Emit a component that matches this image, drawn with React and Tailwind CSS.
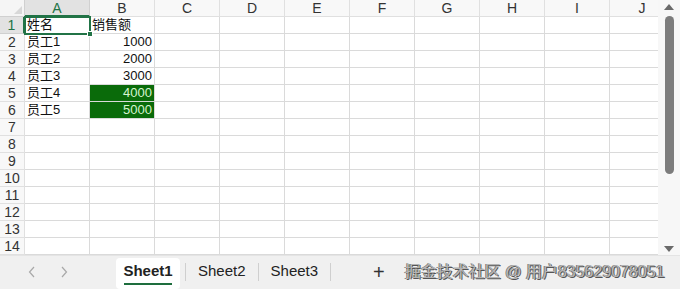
import React from 'react'

const cols = ['A', 'B', 'C', 'D', 'E', 'F', 'G', 'H', 'I', 'J']

const data = {
  1: { A: '姓名', B: '销售额' },
  2: { A: '员工1', B: '1000' },
  3: { A: '员工2', B: '2000' },
  4: { A: '员工3', B: '3000' },
  5: { A: '员工4', B: '4000' },
  6: { A: '员工5', B: '5000' },
}

function Cell({ row, col }) {
  const v = data[row] && data[row][col]
  const isNum = v && /^\d+$/.test(v)
  const green = col === 'B' && (row === 5 || row === 6)
  const selected = row === 1 && col === 'A'
  return (
    <div
      className={
        'relative h-[17px] border-r border-b border-[#dadada] text-[13px] leading-[16px] px-[2px] whitespace-nowrap ' +
        (isNum ? 'text-right ' : 'text-left ') +
        (green ? 'bg-[#0a6b0a] text-[#d6f5d0] ' : 'text-[#111] ')
      }
    >
      {v}
      {selected && (
        <div className="absolute -left-[1px] -top-[1px] w-[67px] h-[19px] border-2 border-[#217346] z-10">
          <div className="absolute -right-[4px] -bottom-[4px] w-[6px] h-[6px] bg-[#217346] border border-white" />
        </div>
      )}
    </div>
  )
}

function Chevron({ dir }) {
  return (
    <svg width="8" height="12" viewBox="0 0 8 12" fill="none" stroke="#a8a8a8" strokeWidth="1.2">
      {dir === 'left' ? <path d="M6 1 L1.5 6 L6 11" /> : <path d="M2 1 L6.5 6 L2 11" />}
    </svg>
  )
}

export default function App() {
  const rows = Array.from({ length: 14 }, (_, i) => i + 1)
  return (
    <div
      className="w-[680px] h-[289px] overflow-hidden bg-white flex flex-col"
      style={{ fontFamily: '"Liberation Sans", "Noto Sans CJK SC", sans-serif' }}
    >
      <div className="flex h-[255px]">
        <div className="w-[658px] overflow-hidden">
          <div className="grid grid-cols-[25px_repeat(10,65px)] w-[675px]">
            <div className="h-[17px] bg-[#f5f5f5] border-r border-b border-[#d0d0d0] relative">
              <div className="absolute right-[2px] bottom-[2px] w-0 h-0 border-l-[8px] border-l-transparent border-b-[8px] border-b-[#d8d8d8]" />
            </div>
            {cols.map((c) => (
              <div
                key={c}
                className={
                  'h-[17px] border-r border-b text-center text-[14px] leading-[16px] ' +
                  (c === 'A'
                    ? 'bg-[#e2e2e2] text-[#217346] border-b-[#217346] border-b-2 border-r-[#d0d0d0]'
                    : 'bg-[#f8f8f8] text-[#333] border-[#e0e0e0]')
                }
              >
                {c}
              </div>
            ))}
            {rows.map((r) => (
              <React.Fragment key={r}>
                <div
                  className={
                    'h-[17px] border-b text-center text-[14px] leading-[16px] ' +
                    (r === 1
                      ? 'bg-[#e2e2e2] text-[#217346] border-r-2 border-r-[#217346] border-b-[#d0d0d0]'
                      : 'bg-[#f8f8f8] text-[#333] border-r border-[#e0e0e0]')
                  }
                >
                  {r}
                </div>
                {cols.map((c) => (
                  <Cell key={c} row={r} col={c} />
                ))}
              </React.Fragment>
            ))}
          </div>
        </div>
        <div className="w-[22px] bg-[#f7f7f7] flex flex-col items-center pt-[4px] pb-[3px]">
          <div className="w-0 h-0 border-l-[5px] border-l-transparent border-r-[5px] border-r-transparent border-b-[6px] border-b-[#6a6a6a]" />
          <div className="mt-[6px] w-[9px] h-[158px] rounded-full bg-[#7c7c7c]" />
          <div className="flex-1" />
          <div className="w-0 h-0 border-l-[5px] border-l-transparent border-r-[5px] border-r-transparent border-t-[6px] border-t-[#6a6a6a]" />
        </div>
      </div>
      <div className="flex-1 bg-[#f0f0f0] flex items-end border-t border-[#e4e4e4]">
        <div className="flex items-center h-[31px] w-[116px] pl-[28px] gap-[24px] pb-[4px]">
          <Chevron dir="left" />
          <Chevron dir="right" />
        </div>
        <div className="w-[64px] h-[31px] bg-white rounded-[4px] flex flex-col items-center pt-[3px]">
          <span className="text-[15px] font-bold text-[#222] leading-[20px]">Sheet1</span>
          <div className="w-[48px] h-[2px] bg-[#1e6e3e] mt-[2px]" />
        </div>
        <div className="flex items-center h-[31px] pb-[4px]">
          <div className="w-px h-[18px] bg-[#cfcfcf] ml-[5px]" />
          <span className="text-[15px] text-[#222] px-[12px]">Sheet2</span>
          <div className="w-px h-[18px] bg-[#cfcfcf]" />
          <span className="text-[15px] text-[#222] px-[12px]">Sheet3</span>
          <div className="w-px h-[18px] bg-[#cfcfcf]" />
          <span className="text-[20px] text-[#333] font-light ml-[42px] leading-[20px]">+</span>
          <span
            className="ml-[20px] text-[16px] text-[#b4b4b4] whitespace-nowrap"
            style={{ textShadow: '1px 1px 0 #555, -1px 0 0 #777' }}
          >
            掘金技术社区 @ 用户835629078051
          </span>
        </div>
      </div>
    </div>
  )
}
